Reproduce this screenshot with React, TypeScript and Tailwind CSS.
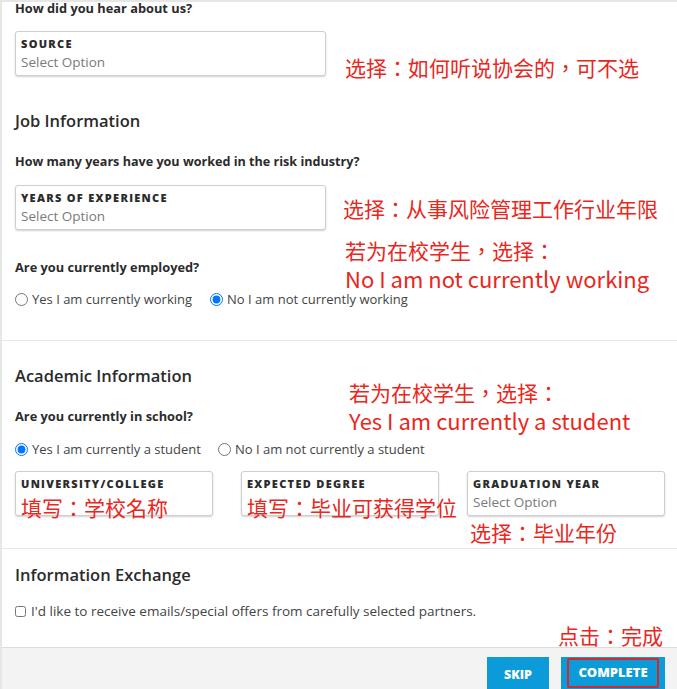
import React from 'react';

const sans = { fontFamily: '"Open Sans", "Liberation Sans", sans-serif' };

// red annotation text drawn over the form
const note = "font-['Noto_Sans_CJK_TC',sans-serif] text-[21px] leading-[28px] text-[#e9271d] whitespace-nowrap";

function SelectBox({ label, value, fill }: { label: string; value?: string; fill?: string }) {
  return (
    <div className="h-[45px] rounded-[3px] border border-[#cfcfcf] bg-white px-[5px] pt-[4px] shadow-[0_1px_2px_rgba(0,0,0,0.18)]">
      <p className="text-[11px] font-extrabold leading-[16px] tracking-[1.3px] text-[#2b2b2b]">{label}</p>
      {fill ? (
        <p className={`${note} mt-[1px] text-[20.5px] leading-[22px]`}>{fill}</p>
      ) : (
        <p className="text-[13.5px] leading-[20px] text-[#7a7a7a]">{value}</p>
      )}
    </div>
  );
}

function Radio({ label, checked }: { label: string; checked?: boolean }) {
  return (
    <label className="flex items-center gap-[4px] text-[13px] leading-[16px] text-[#444]">
      <input type="radio" defaultChecked={checked} className="m-0 h-[13px] w-[13px]" />
      {label}
    </label>
  );
}

export default function App() {
  return (
    <div
      className="h-[689px] w-full overflow-hidden border-l-2 border-t-2 border-[#e6e6e6] bg-white text-[#2b2b2b]"
      style={sans}
    >
      {/* Source + job */}
      <section className="relative pb-[33px] pl-[13px]">
        <p className="mt-[-2px] text-[12.8px] font-bold leading-[16px]">How did you hear about us?</p>
        <div className="mt-[15px] flex h-[45px] items-start gap-[19px]">
          <div className="w-[311px]">
            <SelectBox label="SOURCE" value="Select Option" />
          </div>
          <p className={`${note} mt-[22px]`}>选择：如何听说协会的，可不选</p>
        </div>

        <h2 className="mt-[33px] text-[16.5px] font-semibold leading-[24px]">Job Information</h2>
        <p className="mt-[21px] text-[12.6px] font-bold leading-[16px]">
          How many years have you worked in the risk industry?
        </p>
        <div className="mt-[15px] flex h-[45px] items-start gap-[17px]">
          <div className="w-[311px]">
            <SelectBox label="YEARS OF EXPERIENCE" value="Select Option" />
          </div>
          <p className={`${note} mt-[9px]`}>选择：从事风险管理工作行业年限</p>
        </div>

        <p className="mt-[29px] text-[12.8px] font-bold leading-[16px]">Are you currently employed?</p>
        <div className="mt-[16px] flex gap-[18px]">
          <Radio label="Yes I am currently working" />
          <Radio label="No I am not currently working" checked />
        </div>

        <div className={`${note} absolute left-[343px] top-[236px]`}>
          <p>若为在校学生，选择：</p>
          <p className="text-[22px]">No I am not currently working</p>
        </div>
      </section>

      {/* Academic */}
      <section className="relative border-t border-[#e8e8e8] pl-[13px] pr-[12px] pt-[23px]">
        <h2 className="text-[16.5px] font-semibold leading-[24px]">Academic Information</h2>
        <p className="mt-[20px] text-[12.8px] font-bold leading-[16px]">Are you currently in school?</p>
        <div className="mt-[17px] flex gap-[17px]">
          <Radio label="Yes I am currently a student" checked />
          <Radio label="No I am not currently a student" />
        </div>
        <div className="mt-[14px] grid grid-cols-3 gap-[28px]">
          <SelectBox label="UNIVERSITY/COLLEGE" fill="填写：学校名称" />
          <SelectBox label="EXPECTED DEGREE" fill="填写：毕业可获得学位" />
          <div className="h-[45px]">
            <SelectBox label="GRADUATION YEAR" value="Select Option" />
            <p className={`${note} ml-[3px] mt-[2px]`}>选择：毕业年份</p>
          </div>
        </div>
        <div className="h-[32px]" />

        <div className={`${note} absolute left-[347px] top-[37px]`}>
          <p>若为在校学生，选择：</p>
          <p className="text-[22px]">Yes I am currently a student</p>
        </div>
      </section>

      {/* Information exchange */}
      <section className="border-t border-[#e8e8e8] pl-[13px] pr-[14px] pt-[14px]">
        <h2 className="text-[16.5px] font-semibold leading-[24px]">Information Exchange</h2>
        <label className="mt-[16px] flex items-center gap-[5px] text-[13.5px] leading-[16px] text-[#444]">
          <input type="checkbox" className="m-0 h-[11px] w-[11px]" />
          I'd like to receive emails/special offers from carefully selected partners.
        </label>
        <p className={`${note} mt-[2px] h-[26px] text-right leading-[24px]`}>点击：完成</p>
      </section>

      {/* Footer */}
      <footer className="flex h-[60px] justify-end gap-[12px] border-t border-[#dcdcdc] bg-[#f3f3f3] pr-[12px] pt-[9px]">
        <button className="flex h-[40px] w-[62px] items-start justify-center bg-[#0b9bd8] pt-[10px] text-[12.5px] font-extrabold leading-[16px] text-white">
          SKIP
        </button>
        <button className="flex h-[40px] w-[104px] items-start justify-center bg-[#0b9bd8] pt-[1px]">
          <span className="flex h-[30px] w-[92px] items-center justify-center rounded-[2px] border-2 border-[#d8262a] text-[13px] font-extrabold text-white">
            COMPLETE
          </span>
        </button>
      </footer>
    </div>
  );
}
